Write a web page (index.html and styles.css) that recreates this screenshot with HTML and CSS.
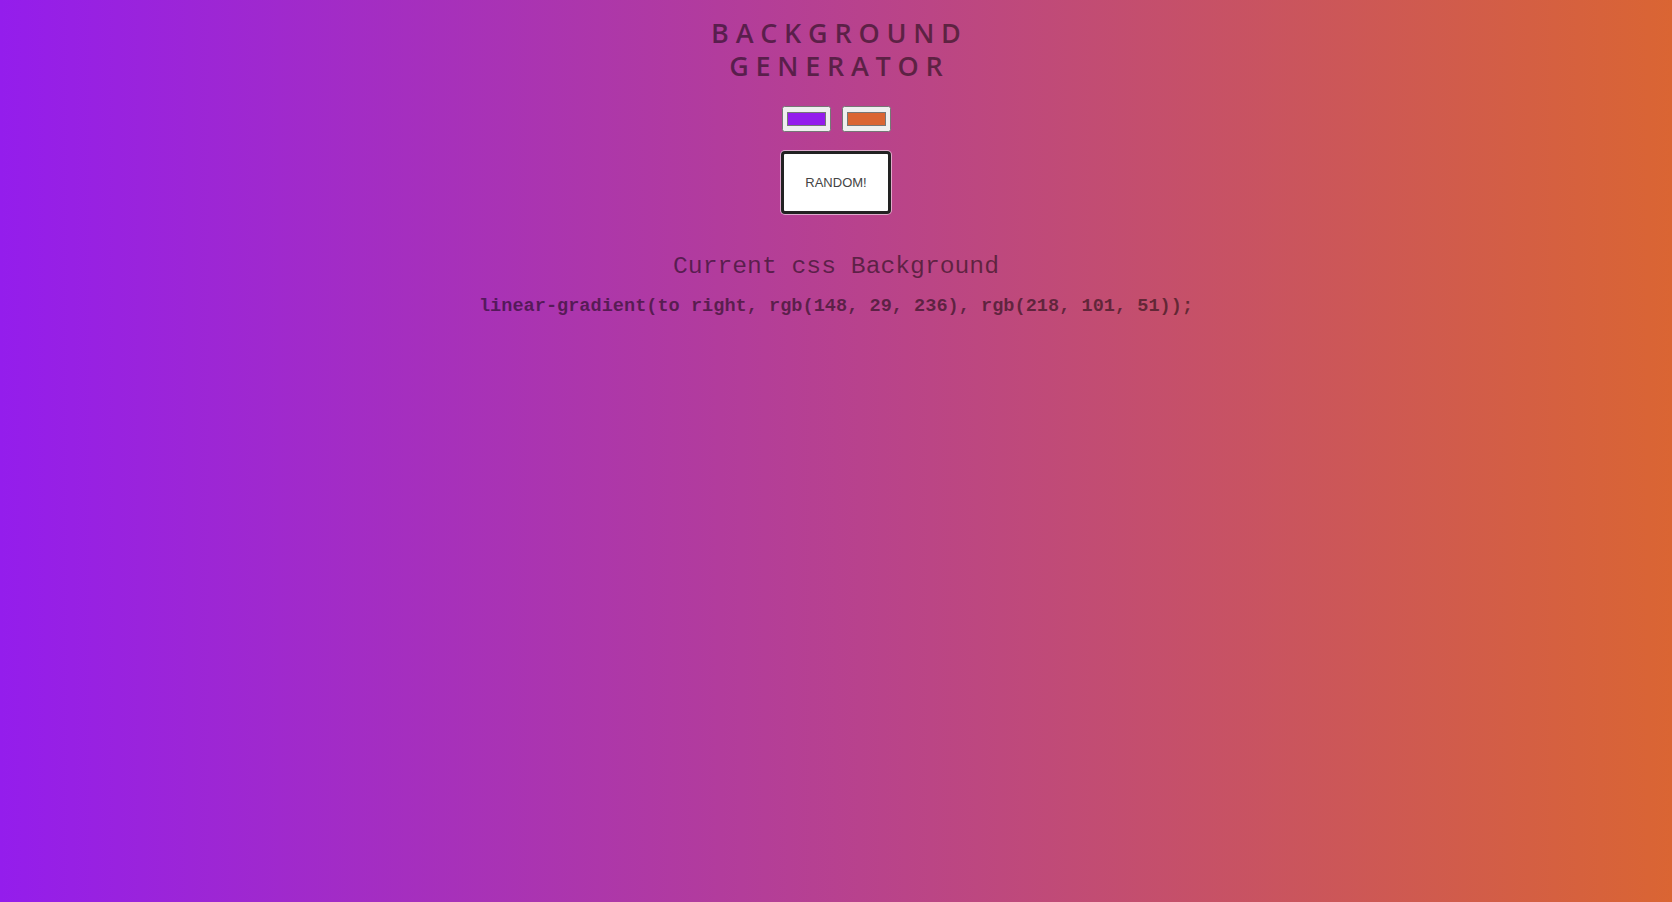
FILE: index.html
```html
<!DOCTYPE html>
<html>
<head>
<meta charset="utf-8">
<title>Background Generator</title>
<link rel="stylesheet" href="styles.css">
</head>
<body class="page">
  <h1 class="title">Background<br>Generator</h1>
  <div class="pickers">
    <input class="color1" type="color" name="color1" value="#941dec">
    <input class="color2" type="color" name="color2" value="#da6533">
  </div>
  <button class="random">RANDOM!</button>
  <h2 class="subtitle">Current css Background</h2>
  <h3 class="code">linear-gradient(to right, rgb(148, 29, 236), rgb(218, 101, 51));</h3>
</body>
</html>
```
FILE: styles.css
```css
html, body {
  height: 100%;
}
.page {
  margin: 0;
  padding-top: 16px;
  box-sizing: border-box;
  min-height: 902px;
  background: linear-gradient(to right, rgb(148, 29, 236), rgb(218, 101, 51));
  color: rgba(0, 0, 0, 0.5);
  text-align: center;
  display: flex;
  flex-direction: column;
  align-items: center;
  font-family: "Open Sans", "Liberation Sans", sans-serif;
}
.title {
  margin: 0;
  font-family: "Open Sans", sans-serif;
  font-weight: 600;
  font-size: 27px;
  line-height: 33px;
  letter-spacing: 0.25em;
  text-transform: uppercase;
  padding-left: 0.25em;
}
.pickers {
  margin-top: 24px;
  display: flex;
  gap: 11px;
}
.pickers input {
  width: 49px;
  height: 26px;
  margin: 0;
}
.random {
  margin-top: 19px;
  width: 110px;
  height: 63px;
  background: #fff;
  border: 3px solid #222;
  border-radius: 4px;
  box-shadow: 0 0 0 1px rgba(255, 255, 255, 0.55);
  font-family: "Liberation Sans", Arial, sans-serif;
  font-size: 13px;
  color: #444;
  padding: 0;
}
.subtitle {
  margin: 37px 0 0;
  font-family: "Liberation Mono", monospace;
  font-weight: 400;
  font-size: 24.7px;
  line-height: 30px;
}
.code {
  margin: 15px 0 0;
  font-family: "Liberation Mono", monospace;
  font-weight: 700;
  font-size: 18.6px;
  line-height: 22px;
}
```
